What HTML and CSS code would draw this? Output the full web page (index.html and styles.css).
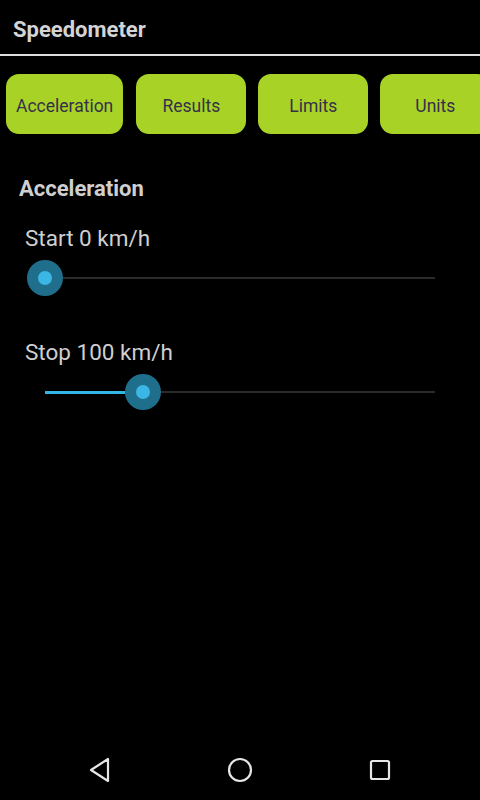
FILE: index.html
```html
<!DOCTYPE html>
<html lang="en">
<head>
  <meta charset="UTF-8" />
  <title>Speedometer</title>
  <link rel="stylesheet" href="styles.css">
</head>

<body>
  <div class="screen">
    <div class="action-bar">
      <h1 class="title">Speedometer</h1>
    </div>

    <div class="tabs">
      <button class="tab">Acceleration</button>
      <button class="tab">Results</button>
      <button class="tab">Limits</button>
      <button class="tab">Units</button>
    </div>

    <div class="content">
      <h2 class="section-title">Acceleration</h2>

      <div class="label">Start 0 km/h</div>
      <div class="seekbar">
        <div class="track">
          <div class="progress" style="width: 0%;"></div>
          <div class="thumb" style="left: 0%;"></div>
        </div>
      </div>

      <div class="label">Stop 100 km/h</div>
      <div class="seekbar">
        <div class="track">
          <div class="progress" style="width: 25.1%;"></div>
          <div class="thumb" style="left: 25.1%;"></div>
        </div>
      </div>
    </div>

    <div class="nav-bar">
      <div class="nav-btn">
        <svg width="24" height="28" viewBox="0 0 24 28">
          <path d="M20 3 L20 25 L3 14 Z" fill="none" stroke="#e6e6e6" stroke-width="2.2" stroke-linejoin="round" />
        </svg>
      </div>
      <div class="nav-btn">
        <svg width="28" height="28" viewBox="0 0 28 28">
          <circle cx="14" cy="14" r="11" fill="none" stroke="#e6e6e6" stroke-width="2.2" />
        </svg>
      </div>
      <div class="nav-btn">
        <svg width="24" height="24" viewBox="0 0 24 24">
          <rect x="3" y="3" width="18" height="18" rx="1.5" fill="none" stroke="#e6e6e6" stroke-width="2.2" />
        </svg>
      </div>
    </div>
  </div>
</body>
</html>
```

FILE: styles.css
```css
body {
  margin: 0;
  background: #000;
  color: #cfcfcf;
  font-family: Roboto, "Noto Sans", sans-serif;
}

.screen {
  display: flex;
  flex-direction: column;
  height: 800px;
  overflow: hidden;
}

.action-bar {
  height: 50px;
  padding: 4px 0 0 13px;
  border-bottom: 2px solid #dcdcdc;
  display: flex;
  align-items: center;
}

.title {
  margin: 0;
  font-size: 22px;
  font-weight: bold;
  color: #d4d4d4;
}

.tabs {
  display: flex;
  gap: 12px;
  padding: 18px 0 0 6px;
  overflow: hidden;
}

.tab {
  flex: none;
  min-width: 110px;
  height: 60px;
  padding: 4px 10px 0 10px;
  border: none;
  border-radius: 13px;
  background: #a8d326;
  color: #35304a;
  font-family: Roboto, "Noto Sans", sans-serif;
  font-size: 17.5px;
}

.tab:first-child {
  margin-right: 1px;
}

.content {
  flex: 1;
  padding: 42px 27px 0 19px;
}

.section-title {
  margin: 0 0 25px 0;
  padding-top: 1px;
  font-size: 22px;
  line-height: 24px;
  font-weight: bold;
  color: #cfcfcf;
}

.label {
  margin-left: 6px;
  font-size: 22.5px;
  line-height: 24px;
  color: #cfcfcf;
}

.seekbar {
  margin: 10px 0 44px 8px;
  height: 36px;
  padding: 0 18px;
  display: flex;
  align-items: center;
}

.track {
  position: relative;
  flex: 1;
  height: 2px;
  background: #2b2b2b;
}

.progress {
  height: 3px;
  margin-top: -0.5px;
  background: #33b5e5;
}

.thumb {
  position: absolute;
  top: 1px;
  width: 36px;
  height: 36px;
  margin: -18px 0 0 -18px;
  border-radius: 50%;
  background: #1f6f8c;
  display: flex;
  align-items: center;
  justify-content: center;
}

.thumb::after {
  content: "";
  width: 14px;
  height: 14px;
  border-radius: 50%;
  background: #3bb7e6;
}

.nav-bar {
  height: 60px;
  display: flex;
  padding: 0 30px;
  margin-top: auto;
}

.nav-btn {
  width: 140px;
  display: flex;
  align-items: center;
  justify-content: center;
}
```
